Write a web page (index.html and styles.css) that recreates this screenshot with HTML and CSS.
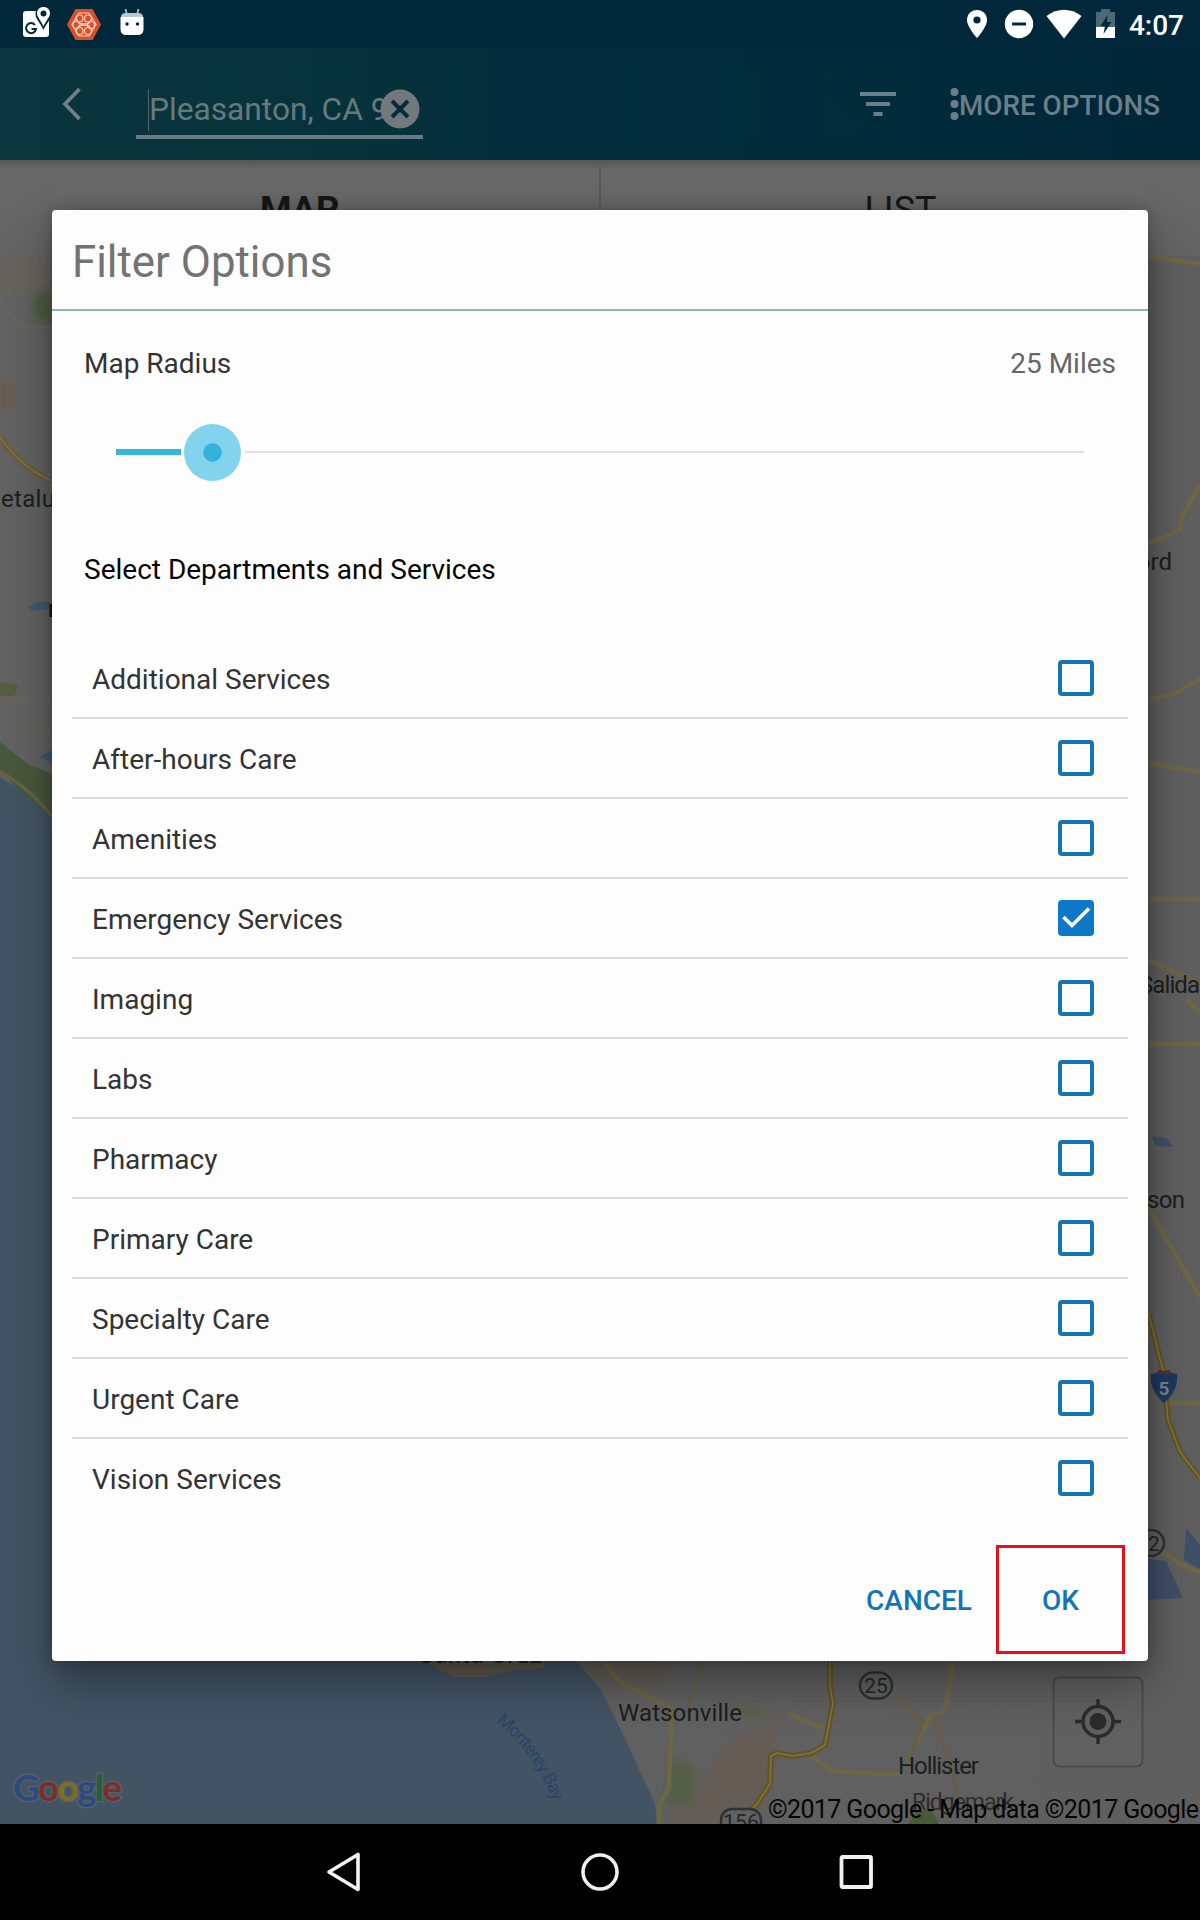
FILE: index.html
```html
<!DOCTYPE html>
<html lang="en">
<head>
<meta charset="utf-8">
<title>Filter Options</title>
<link rel="stylesheet" href="styles.css">
</head>
<body>
<div class="screen">
  <div class="status-bar">
    <svg class="status-left" width="130" height="48" viewBox="20 0 130 48">
      <rect x="23" y="11" width="26" height="26" rx="3" fill="#fff"/>
      <path d="M43.500 6c-5 0-8 3.500-8 8 0 5 5 9 8 16 3-7 8-11 8-16 0-4.500-3-8-8-8z" fill="#00283a"/>
      <path d="M43.500 7c-3.700 0-6.500 2.700-6.500 6.200 0 4 4 7 6.500 13.300 2.500-6.300 6.500-9.300 6.500-13.300 0-3.500-2.800-6.200-6.500-6.200z" fill="#fff"/>
      <circle cx="43.500" cy="13.500" r="3" fill="#00283a"/>
      <path d="M35 25a5 5 0 1 0 1 4h-4.500" fill="none" stroke="#00283a" stroke-width="2"/>
      <path d="M75.500 9h17l8.500 15.500-8.500 15.500h-17L67 24.500z" fill="#d3512f"/>
      <g fill="none" stroke="#ffc9ae" stroke-width="1.200">
        <path d="M79 13h10l3 5-3 5.500H79L76 18zM79 36h10l3-5-3-5.500H79L76 31zM76 18l-4 6.500 4 6.500M92 18l4 6.500-4 6.500M79 23.500l10 2.500M89 23.500L79 26"/>
        <circle cx="79.500" cy="18.500" r="3.500"/><circle cx="88" cy="18.500" r="3.500"/>
        <circle cx="76.500" cy="25" r="3.500"/><circle cx="91" cy="25" r="3.500"/>
        <circle cx="79.500" cy="31" r="3.500"/><circle cx="88" cy="31" r="3.500"/>
      </g>
      <path d="M125.500 9l1.500 6M138.500 9l-1.500 6" stroke="#b9c9d0" stroke-width="1.600"/>
      <path d="M121 17q0-4 5-4h12q5 0 5 4z" fill="#b9c9d0"/>
      <path d="M120.500 17h23v12q0 6-6 6h-11q-6 0-6-6z" fill="#fff"/>
      <circle cx="127" cy="24" r="1.700" fill="#00283a"/><circle cx="137.500" cy="24" r="1.700" fill="#00283a"/>
    </svg>
    <div class="status-right">
      <svg width="156" height="48" viewBox="964 0 156 48">
        <path d="M977 10c-5.700 0-10 4.300-10 10 0 7 10 18 10 18s10-11 10-18c0-5.700-4.300-10-10-10z" fill="#fff"/>
        <circle cx="977" cy="20" r="3.600" fill="#00283a"/>
        <circle cx="1019" cy="24" r="14.200" fill="#fff"/><path d="M1012 24h14" stroke="#00283a" stroke-width="3"/>
        <path d="M1046.500 16q17.500-12.500 35 0L1064 38.500z" fill="#fff"/>
        <path d="M1096 12h5V9h9v3h5v15h-19z" fill="#4d6975"/>
        <path d="M1096 27h19v11h-19z" fill="#fff"/>
        <path d="M1107.500 15l-7 11h4.500l-1.500 8 8-12h-4.500z" fill="#00283a"/>
      </svg>
      <span class="clock">4:07</span>
    </div>
  </div>

  <header class="app-bar">
    <svg class="back" width="20" height="34" viewBox="0 0 20 34"><path d="M17.500 2L3 17l14.500 15" fill="none" stroke="#708086" stroke-width="3.800"/></svg>
    <div class="search">
      <span class="search-text">Pleasanton, CA 9</span>
      <svg class="clear" width="40" height="40" viewBox="0 0 40 40"><circle cx="20" cy="20" r="19.500" fill="#73787c"/><path d="M12 12l16 16M28 12L12 28" stroke="#042c38" stroke-width="4"/></svg>
    </div>
    <svg class="filter" width="38" height="26" viewBox="0 0 38 26"><path d="M1 3h36M7 13h24M14.500 23h9" stroke="#6b7f88" stroke-width="4"/></svg>
    <svg class="dots" width="9" height="34" viewBox="0 0 9 34"><g fill="#6b7f88"><circle cx="4.500" cy="5" r="4"/><circle cx="4.500" cy="17" r="4"/><circle cx="4.500" cy="29" r="4"/></g></svg>
    <span class="more">MORE OPTIONS</span>
  </header>

  <nav class="tabs">
    <div class="tab tab-active">MAP</div>
    <div class="tab">LIST</div>
  </nav>

  <main class="map">
    <svg width="1200" height="1568" viewBox="0 256 1200 1568">
      <defs>
        <linearGradient id="land" x2="1"><stop offset="0" stop-color="#626262"/><stop offset="1" stop-color="#5f5f5f"/></linearGradient>
        <path id="bay" d="M496 1722Q535 1752 556 1808"/>
        <filter id="soft" x="-20%" y="-20%" width="140%" height="140%"><feGaussianBlur stdDeviation="5"/></filter>
      </defs>
      <rect y="256" width="1200" height="1568" fill="url(#land)"/>
      <!-- hills and parks -->
      <g filter="url(#soft)">
        <path d="M0 256h52v30l-25 10-27-8z" fill="#66635b"/>
        <path d="M34 294l18-4v36l-18-8z" fill="#4b5b3c"/>
        <path d="M0 375l12 10v24l-12 5z" fill="#6a5c50"/>
        <path d="M735 1735l45-15-10 55-5 30-40 19h-65l38-40z" fill="#655b55"/>
        <path d="M670 1760l25 5-5 40-26 0z" fill="#535f44"/>
        <path d="M737 1700l30 12-8 10-25-12z" fill="#5c6048"/>
        <path d="M576 1660h90v30l-48-4-18 1z" fill="#625d55"/>
      </g>
      <path d="M0 300q12-18 30-16t22-8M5 310q20 22 47 16" fill="none" stroke="#6d6854" stroke-width="1.500"/>
      <path d="M0 682l18 3-4 12H0z" fill="#535e40"/>
      <path d="M0 697h52M0 716q20 6 52 20" stroke="#686553" stroke-width="2" fill="none"/>
      <path d="M0 742l28 22 24 10v42l-24-16L0 770z" fill="#48583c"/>
      <path d="M28 607q12-8 24-4v6l-20 2zM40 757l12-7v12z" fill="#3e5a72"/>
      <!-- ocean -->
      <path d="M0 777l16 10 16 14 20 12 0 848 524 0 24 27 21 42 34 74 2 20H0z" fill="#425464"/>
      <path d="M0 772q26 13 52 44" fill="none" stroke="#66633f" stroke-width="3.500"/>
      <path d="M419 1660h126v8l-35 3-24 6-36-2z" fill="#5d5b4a"/>
      <path d="M444 1667h45v10h-38z" fill="#62584f"/>
      <path d="M908 1824l8-12 15-2 8 14z" fill="#465a35"/>
      <!-- minor roads -->
      <g fill="none" stroke="#6d6745" stroke-width="4.500" stroke-linejoin="round">
        <path d="M603 1661l18 22 30 15 20 10v25l-2 55-10 18v18"/>
        <path d="M952 1661l-2 25-6 25-14 5-22 44M812 1757l20 14 45 3h22M788 1714l36 14"/>
        <path d="M1148 256l52 8M1148 544l32-14 3-15 17-30M1148 700l26-6 26-15M1148 763l52 9M1148 899h52M1148 959q30 15 52 24M1148 1044h52M1148 1207l52 90M1170 1403h30M1162 1550q20 18 38 22M1187 1000l13 12"/>
      </g>
      <g fill="none" stroke="#655f49" stroke-width="4" stroke-linejoin="round">
        <path d="M701 1661l-4 20-8 20v12M895 1695l28 26-14 40M935 1715l12 40 12 47"/>
      </g>
      <!-- highways -->
      <g fill="none" stroke="#655522" stroke-width="6" stroke-linejoin="round">
        <path d="M830 1661v25l3 17-8 42-14 8-18 3-16-3-6 3-1 28-13 20-10 10"/>
        <path d="M1149 1315l15 60 4 45 12 32 20 26"/>
      </g>
      <path d="M0 437q20 30 52 44" fill="none" stroke="#6a5c38" stroke-width="6"/>
      <g fill="none" stroke="#80744b" stroke-width="1.500" stroke-linejoin="round">
        <path d="M830 1661v25l3 17-8 42-14 8-18 3-16-3-6 3-1 28-13 20-10 10M1149 1315l15 60 4 45 12 32 20 26M0 437q20 30 52 44"/>
      </g>
      <path d="M1152 1136l15 2 6 9-18-1zM1186 1528l14 17v24l-16-9zM1148 1559l18 2 17 37-35 2z" fill="#3f4f68"/>
      <!-- place names -->
      <g class="place">
        <text x="1" y="507" textLength="54">etalu</text>
        <text x="1172" y="570" text-anchor="end">ord</text>
        <text x="1139" y="993" textLength="61">Salida</text>
        <text x="1147" y="1208" textLength="38">son</text>
        <text x="419" y="1663" textLength="123">Santa Cruz</text>
        <text x="618" y="1721" textLength="124">Watsonville</text>
        <text x="898" y="1774" textLength="81">Hollister</text>
        <text x="912" y="1810" textLength="102" class="minor">Ridgemark</text>
      </g>
      <path d="M51 604v13" stroke="#161616" stroke-width="3"/>
      <text class="bay-name"><textPath href="#bay">Monterey Bay</textPath></text>
      <!-- route shields -->
      <g class="shield">
        <rect x="860" y="1672.500" width="32" height="26" rx="13"/><text x="876" y="1693">25</text>
        <rect x="721" y="1809" width="40" height="28" rx="11"/><text x="741" y="1829">156</text>
        <circle cx="1151" cy="1543" r="13"/><text x="1154" y="1551">2</text>
      </g>
      <path d="M1151 1374q6 0 8-4 5 2 10 0 2 4 8 4 2 16-13 29-15-13-13-29z" fill="#1d385f"/>
      <path d="M1151 1374q6 0 8-4 5 2 10 0 2 4 8 4z" fill="#642b2d"/>
      <text class="interstate" x="1164" y="1395">5</text>
      <text class="google" x="13" y="1801" textLength="109"><tspan fill="#2d4a7d">G</tspan><tspan fill="#7b2f2a">o</tspan><tspan fill="#826c1e">o</tspan><tspan fill="#2d4a7d">g</tspan><tspan fill="#245e35">l</tspan><tspan fill="#7b2f2a">e</tspan></text>
      <text class="credit" x="768" y="1818" textLength="431">©2017 Google - Map data ©2017 Google</text>
      <!-- my-location button -->
      <rect x="1053.500" y="1677.500" width="89" height="89" rx="6" fill="#606060" stroke="#4a4a4a" stroke-width="2"/>
      <g fill="none" stroke="#2b2b2b" stroke-width="3.500"><circle cx="1098" cy="1721.500" r="15"/><path d="M1098 1699v8M1098 1736v8M1075 1721.500h8M1113 1721.500h8"/></g>
      <circle cx="1098" cy="1721.500" r="8.500" fill="#2b2b2b"/>
    </svg>
  </main>

  <footer class="nav-bar">
    <svg width="40" height="44" viewBox="0 0 40 44"><path d="M34 4.500v35L5 22z" fill="none" stroke="#f2f2f2" stroke-width="3.600" stroke-linejoin="round"/></svg>
    <svg width="40" height="44" viewBox="0 0 40 44"><circle cx="20" cy="22" r="17" fill="none" stroke="#f2f2f2" stroke-width="3.600"/></svg>
    <svg width="40" height="44" viewBox="0 0 40 44"><rect x="5.500" y="7" width="29.500" height="30" rx="1" fill="none" stroke="#f2f2f2" stroke-width="3.800"/></svg>
  </footer>

  <section class="dialog">
    <h1 class="dialog-title">Filter Options</h1>
    <div class="radius"><span>Map Radius</span><span class="radius-value">25 Miles</span></div>
    <div class="slider"><span class="slider-fill"></span><span class="slider-thumb"></span><span class="slider-rest"></span></div>
    <h2 class="dialog-subtitle">Select Departments and Services</h2>
    <ul class="services">
      <li><span>Additional Services</span><i class="box"></i></li>
      <li><span>After-hours Care</span><i class="box"></i></li>
      <li><span>Amenities</span><i class="box"></i></li>
      <li><span>Emergency Services</span><i class="box box-checked"><svg width="36" height="36" viewBox="0 0 36 36"><path d="M5.500 17L14 25.500 31 8.500" fill="none" stroke="#fff" stroke-width="3.600"/></svg></i></li>
      <li><span>Imaging</span><i class="box"></i></li>
      <li><span>Labs</span><i class="box"></i></li>
      <li><span>Pharmacy</span><i class="box"></i></li>
      <li><span>Primary Care</span><i class="box"></i></li>
      <li><span>Specialty Care</span><i class="box"></i></li>
      <li><span>Urgent Care</span><i class="box"></i></li>
      <li><span>Vision Services</span><i class="box"></i></li>
    </ul>
    <div class="actions">
      <button class="action">CANCEL</button>
      <button class="action action-ok">OK</button>
    </div>
  </section>
</div>
</body>
</html>
```
FILE: styles.css
```css
* { box-sizing: border-box; }
body { margin: 0; font-family: Roboto, "Liberation Sans", sans-serif; font-size: 28px; }
svg { display: block; flex: none; }

.screen {
  position: relative;
  width: 1200px;
  height: 1920px;
  display: flex;
  flex-direction: column;
  overflow: hidden;
  background: #000;
}

.status-bar {
  height: 48px;
  flex: none;
  display: flex;
  justify-content: space-between;
  padding: 0 16px 0 20px;
  background: #00283a;
}
.status-right { display: flex; gap: 9px; }
.clock { color: #fff; font-weight: 500; font-size: 28px; line-height: 51px; }

.app-bar {
  height: 112px;
  flex: none;
  display: flex;
  align-items: center;
  padding-left: 62px;
  background: linear-gradient(90deg, #0a353d 0, #06323b 30%, #042e3d 42%, #002b3b 75%, #002638 100%);
}
.search {
  display: flex;
  align-items: center;
  width: 287px;
  height: 54px;
  margin: 16px 0 0 54px;
  border-bottom: 4px solid #667b81;
}
.search-text {
  width: 238px;
  flex: none;
  margin-left: 12px;
  border-left: 1px solid #4f686c;
  line-height: 42px;
  font-size: 31.700px;
  color: #667a7e;
  white-space: nowrap;
}
.clear { margin: 0 0 2px -6px; }
.filter { margin-left: 436px; }
.dots { margin-left: 53px; }
.more { font-weight: 500; font-size: 27.800px; color: #6b7f88; line-height: 40px; margin-top: 4px; white-space: nowrap; }

.tabs {
  height: 96px;
  flex: none;
  display: grid;
  grid-template-columns: 599px 601px;
  background: linear-gradient(#565656 0, #686868 10px, #646464 100%);
}
.tab {
  font-size: 36px;
  line-height: 100px;
  text-align: center;
  color: #161616;
  border-bottom: 2px solid #505050;
}
.tab + .tab { border-left: 2px solid #595959; }
.tab-active { font-weight: 700; border-bottom: 6px solid #002a45; }

.map { height: 1568px; flex: none; }
.place { font-size: 24px; fill: #1d1d1d; }
.place .minor { font-size: 23px; fill: #2c2c2c; }
.bay-name { font-size: 18px; fill: #2b4365; letter-spacing: -0.9px; }
.shield rect, .shield circle { fill: #606060; stroke: #303030; stroke-width: 2.5px; }
.shield text { font-size: 21px; fill: #242424; text-anchor: middle; }
.interstate { font-size: 19px; font-weight: 700; fill: #77818f; text-anchor: middle; }
.google { font-family: Lato, sans-serif; font-size: 37px; font-weight: 700; paint-order: stroke; stroke: #55606c; stroke-width: 3px; }
.credit { font-size: 25px; fill: #050505; }

.nav-bar {
  height: 96px;
  flex: none;
  display: flex;
  justify-content: center;
  align-items: center;
  gap: 216px;
  background: #000;
}

.dialog {
  position: absolute;
  left: 52px;
  top: 210px;
  width: 1096px;
  height: 1451px;
  display: flex;
  flex-direction: column;
  border-radius: 4px;
  background: #fdfdfd;
  box-shadow: 0 22px 46px rgba(0, 0, 0, 0.36), 0 0 14px rgba(0, 0, 0, 0.22);
  color: #333;
}
.dialog-title {
  height: 101px;
  margin: 0;
  padding-left: 20px;
  border-bottom: 2px solid #8ab8b8;
  font-size: 43.800px;
  font-weight: 400;
  line-height: 104px;
  color: #737373;
}
.radius { display: flex; justify-content: space-between; padding: 36px 32px 0; line-height: 34px; }
.radius-value { color: #666; }
.slider { display: flex; align-items: center; height: 58px; margin: 42px 64px 0; }
.slider-fill { width: 65px; height: 6px; background: #35b5dd; }
.slider-thumb {
  width: 57px;
  height: 57px;
  margin: 0 4px 0 3px;
  border-radius: 50%;
  background: radial-gradient(circle, #31b3dc 8.7px, #83d3ee 9.700px);
}
.slider-rest { flex: 1; height: 2px; background: #e0e0e0; }
.dialog-subtitle { margin: 72px 32px 0; font-size: 28px; font-weight: 400; line-height: 34px; color: #050505; }
.services { list-style: none; margin: 52px 20px 0; padding: 0; }
.services li {
  display: flex;
  align-items: center;
  justify-content: space-between;
  height: 80px;
  padding: 0 34px 0 20px;
  border-bottom: 2px solid #dedede;
}
.services li span { padding-top: 2px; }
.services li:last-child { border-bottom: 0; height: 78px; }
.box { width: 36px; height: 36px; border: 4px solid #1273b5; border-radius: 4px; }
.box-checked { background: #0b78c8; border: 0; }
.actions { display: flex; justify-content: flex-end; margin: 28px 23px 0; }
.action {
  height: 109px;
  padding: 2px 24px 0;
  border: 0;
  background: none;
  font: 500 28px/34px Roboto, "Liberation Sans", sans-serif;
  color: #1475b6;
}
.action-ok { width: 129px; border: 3px solid #e50f1d; }
```
